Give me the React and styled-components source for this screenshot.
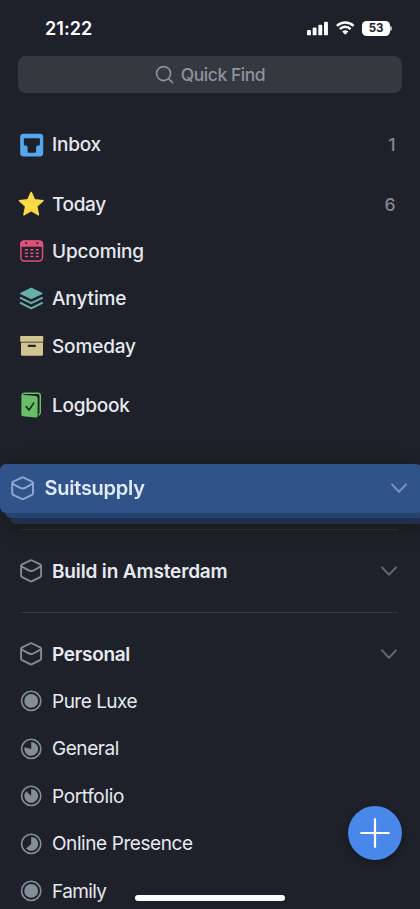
import React from 'react'
import styled, { createGlobalStyle } from 'styled-components'

const GlobalStyle = createGlobalStyle`
*{
  box-sizing:border-box;
}
body{
  margin:0;
  background:#1e2129;
}
`

const Screen = styled.main`
position:relative;
width:420px;
height:909px;
overflow:hidden;
background:#1e2129;
font-family:Inter, "Liberation Sans", sans-serif;
color:#e6e9ef;
`

const StatusBar = styled.header`
display:flex;
align-items:center;
justify-content:space-between;
height:56px;
padding:0 28px 0 45px;
`
const Clock = styled.span`
font-size:18px;
font-weight:600;
letter-spacing:0.05px;
color:#fff;
`
const StatusIcons = styled.div`
display:flex;
align-items:center;
gap:7.5px;
`
const Battery = styled.div`
display:flex;
align-items:center;
gap:0.5px;
`
const BatteryBody = styled.span`
width:27.5px;
height:15px;
border-radius:4.5px;
background:#fff;
color:#1e2129;
font-size:11.5px;
font-weight:700;
line-height:15.5px;
text-align:center;
`
const BatteryTip = styled.span`
width:1.6px;
height:5px;
border-radius:0 2px 2px 0;
background:#b9bbc0;
`

const SearchBar = styled.div`
display:flex;
align-items:center;
justify-content:center;
gap:7px;
height:36.5px;
margin:0 18px;
border-radius:8px;
background:#343940;
color:#8d929e;
font-size:17.5px;
font-weight:500;
letter-spacing:${p => p.$spacing}px;
`

const List = styled.nav`
padding-top:28.7px;
`
const Row = styled.div`
display:flex;
align-items:center;
gap:8px;
height:47.4px;
padding:0 22px 0 18px;
margin-bottom:${p => p.$gapAfter || 0}px;
`
const Label = styled.span`
flex:1;
font-size:19px;
font-weight:${p => p.$weight || 540};
letter-spacing:${p => p.$spacing || 0}px;
white-space:nowrap;
`
const Count = styled.span`
padding-right:2.5px;
font-size:17.5px;
font-weight:500;
color:#838892;
`
const Divider = styled.hr`
height:1px;
margin:${p => p.$space || '17px 22px 17.6px 21px'};
border:none;
background:#353941;
`

const Stack = styled.div`
position:relative;
height:60px;
margin-top:34.5px;
filter:drop-shadow(0 3px 9px rgba(20, 22, 20, 0.75));
`
const StackLayer = styled.div`
position:absolute;
left:${p => p.$inset}px;
right:-6px;
top:20px;
height:${p => p.$height}px;
border-radius:6px;
background:${p => p.$color};
`
const DraggedArea = styled.div`
position:relative;
display:flex;
align-items:center;
gap:8.5px;
width:422px;
height:49.5px;
padding:0 14px 0 9px;
border-radius:6px;
background:#30538a;
color:#e1ebfc;
`
const DraggedLabel = styled(Label)`
font-size:20px;
`

const AddButton = styled.button`
position:absolute;
right:18.5px;
bottom:49.5px;
display:flex;
align-items:center;
justify-content:center;
width:54px;
height:54px;
padding:0;
border:none;
border-radius:50%;
background:#4987ea;
box-shadow:0 3px 8px rgba(0, 0, 0, 0.3);
`
const HomeIndicator = styled.div`
position:absolute;
left:135px;
bottom:8.5px;
width:150px;
height:5.5px;
border-radius:3px;
background:#fff;
`
const Svg = styled.svg`
display:block;
flex:none;
`

const Icon = ({ children, size = 26 }) => (
  <Svg width={size} height={size} viewBox="0 0 26 26" fill="none">{children}</Svg>
)

const InboxIcon = () => (
  <Icon>
    <path fillRule="evenodd" fill="#55a7ee" d="M5.5 1.7H22Q25.2 1.7 25.2 5V21Q25.2 24.4 22 24.4H5.5Q2.2 24.4 2.2 21V5Q2.2 1.7 5.5 1.7ZM6.6 6.2Q5.8 6.2 5.8 7V12.6Q5.8 13.5 6.7 13.5H7.8Q9.6 13.5 9.6 15.3V19.4Q9.6 20.7 10.9 20.7H16.8Q18.1 20.7 18.1 19.4V15.3Q18.1 13.5 19.9 13.5H21Q21.9 13.5 21.9 12.6V7Q21.9 6.2 21 6.2Z" />
  </Icon>
)

const StarIcon = () => (
  <Icon>
    <path fill="#fcd945" stroke="#fcd945" strokeWidth="1.4" strokeLinejoin="round" d="M13.2 1.4 16.6 8.8 25 9.7 18.8 15.3 20.5 23.8 13.2 19.6 5.9 23.8 7.6 15.3 1.4 9.7 9.8 8.8Z" />
  </Icon>
)

const CalendarIcon = () => (
  <Icon>
    <rect x="2.9" y="3.1" width="21.6" height="19.8" rx="3.4" stroke="#dd5079" strokeWidth="1.5" />
    <path fill="#dd5079" d="M2.2 8.7V6Q2.2 2.4 5.8 2.4H21.6Q25.2 2.4 25.2 6V8.7Z" />
    <circle cx="8.2" cy="5.1" r="1" fill="#1e2129" />
    <circle cx="19.4" cy="5.1" r="1" fill="#1e2129" />
    <path stroke="#dd5079" strokeWidth="1.5" d="M6.8 11.8h3.2M12.2 11.8h3.2M17.6 11.8h3.2M6.8 15.2h3.2M12.2 15.2h3.2M17.6 15.2h3.2M6.8 18.6h3.2M12.2 18.6h3.2M17.6 18.6h3.2" />
  </Icon>
)

const LayersIcon = () => (
  <Icon>
    <path fill="#69b1a8" stroke="#69b1a8" strokeLinejoin="round" d="M13.3 2.1 24.4 7.5 13.3 12.7 2.2 7.5Z" />
    <path stroke="#69b1a8" strokeWidth="2" strokeLinejoin="round" d="M2 11.7 13.3 17.2 24.7 11.7M2 16.7 13.3 22.4 24.7 16.7" />
  </Icon>
)

const BoxIcon = () => (
  <Icon>
    <path fill="#d2c48e" d="M2.8 3H24.7Q25.2 3 25.2 3.5V8.7H2.2V3.5Q2.2 3 2.8 3ZM3 9.6H25V21.7Q25 22.7 24 22.7H4Q3 22.7 3 21.7Z" />
    <rect x="9.8" y="11.7" width="8" height="2.2" rx=".5" fill="#24262b" />
  </Icon>
)

const LogbookIcon = () => (
  <Icon>
    <path fill="#68bf67" d="M3.4 4Q3.4 2.6 4.9 2.7L17.6 3.9Q19.5 4.1 19.6 6V24Q19.6 25.6 18 25.4L5 24.2Q3.4 24 3.4 22.5Z" />
    <path stroke="#68bf67" strokeWidth="1.5" strokeLinecap="round" strokeLinejoin="round" d="M4.2 3.2Q4.4 1.3 6.4 1.3H19.9Q22.3 1.3 22.3 3.7V20.2Q22.3 21.8 21 22.8" />
    <path stroke="#20332a" strokeWidth="1.7" strokeLinecap="round" strokeLinejoin="round" d="M8.2 14.6 11 18 15.8 11.1" />
  </Icon>
)

const AreaIcon = ({ color = '#858b96', size }) => (
  <Icon size={size}>
    <path stroke={color} strokeWidth="1.9" strokeLinejoin="round" d="M12.1 2.5Q13.1 2 14.1 2.5L22.1 6.3Q23.1 6.8 23.1 7.9V17.5Q23.1 18.6 22.1 19.1L14.1 23.1Q13.1 23.6 12.1 23.1L4.1 19.1Q3.1 18.6 3.1 17.5V7.9Q3.1 6.8 4.1 6.3ZM3.4 8.4 10.2 12.2Q13.1 13.9 16 12.2L22.8 8.4" />
  </Icon>
)

// progress goes from 0 to 1, clockwise from the top
const ProgressIcon = ({ progress }) => {
  const angle = progress * Math.PI * 2
  const x = 13.2 + 6.9 * Math.sin(angle)
  const y = 12.9 - 6.9 * Math.cos(angle)
  return (
    <Icon>
      <circle cx="13.2" cy="12.9" r="9.6" stroke="#858d98" strokeWidth="1.6" />
      {progress === 1
        ? <circle cx="13.2" cy="12.9" r="6.9" fill="#858d98" />
        : <path fill="#858d98" d={`M13.2 12.9V6A6.9 6.9 0 ${progress > 0.5 ? 1 : 0} 1 ${x} ${y}Z`} />}
    </Icon>
  )
}

const Chevron = ({ color = '#626771' }) => (
  <Svg width="18" height="12" viewBox="0 0 18 12" fill="none">
    <path d="M2 2.4 9 9.7 16 2.4" stroke={color} strokeWidth="2" strokeLinecap="round" strokeLinejoin="round" />
  </Svg>
)

const SignalIcon = () => (
  <Svg width="21.5" height="15" viewBox="0 0 22 15" fill="#fff">
    <rect x="0" y="9" width="4" height="5.5" rx="1.2" />
    <rect x="5.8" y="6.5" width="4" height="8" rx="1.2" />
    <rect x="11.6" y="3.7" width="4" height="10.8" rx="1.2" />
    <rect x="17.4" y=".7" width="4" height="13.8" rx="1.2" />
  </Svg>
)

const WifiIcon = () => (
  <Svg width="18.5" height="14.4" viewBox="0 0 18 14" fill="none">
    <path d="M.9 4.7Q4.4 1.4 9 1.4T17.1 4.7M3.8 7.9Q6.1 5.6 9 5.6T14.2 7.9" stroke="#fff" strokeWidth="2.4" />
    <path d="M6 10.2Q9 7.9 12 10.2L9.5 12.9Q9 13.4 8.5 12.9Z" fill="#fff" />
  </Svg>
)

const SearchIcon = () => (
  <Svg width="19" height="19" viewBox="0 0 19 19" fill="none" stroke="#8d929e" strokeWidth="1.6" strokeLinecap="round">
    <circle cx="8.6" cy="8.6" r="7" />
    <path d="M13.7 13.7 17.6 17.6" />
  </Svg>
)

const lists = [
  { name: 'Inbox', icon: <InboxIcon />, count: 1, gap: 11.8, spacing: -0.2 },
  { name: 'Today', icon: <StarIcon />, count: 6, spacing: -0.35 },
  { name: 'Upcoming', icon: <CalendarIcon />, spacing: -0.15 },
  { name: 'Anytime', icon: <LayersIcon />, spacing: -0.1 },
  { name: 'Someday', icon: <BoxIcon />, gap: 11.8, spacing: -0.15 },
  { name: 'Logbook', icon: <LogbookIcon />, spacing: -0.25 },
]

const projects = [
  { name: 'Pure Luxe', progress: 1, spacing: -0.5 },
  { name: 'General', progress: 0.79, spacing: -0.45 },
  { name: 'Portfolio', progress: 0.87, spacing: -0.35 },
  { name: 'Online Presence', progress: 0.63, spacing: -0.42 },
  { name: 'Family', progress: 1, spacing: -0.6 },
]

const App = () => {
  return (
    <Screen>
      <GlobalStyle />
      <StatusBar>
        <Clock>21:22</Clock>
        <StatusIcons>
          <SignalIcon />
          <WifiIcon />
          <Battery>
            <BatteryBody>53</BatteryBody>
            <BatteryTip />
          </Battery>
        </StatusIcons>
      </StatusBar>
      <SearchBar $spacing={-0.45}>
        <SearchIcon />
        <span>Quick Find</span>
      </SearchBar>
      <List>
        {lists.map(item => (
          <Row key={item.name} $gapAfter={item.gap}>
            {item.icon}
            <Label $spacing={item.spacing}>{item.name}</Label>
            {item.count && <Count>{item.count}</Count>}
          </Row>
        ))}
      </List>
      <Stack>
        <StackLayer $inset={10} $height={40} $color="#20304c" />
        <StackLayer $inset={5} $height={34.5} $color="#27426e" />
        <DraggedArea>
          <AreaIcon color="#8ca7d1" size={27} />
          <DraggedLabel $weight={580} $spacing={-0.25}>Suitsupply</DraggedLabel>
          <Chevron color="#7893c0" />
        </DraggedArea>
      </Stack>
      <Divider $space="5.6px 22px 17.2px 21px" />
      <Row>
        <AreaIcon />
        <Label $weight={600} $spacing={-0.15}>Build in Amsterdam</Label>
        <Chevron />
      </Row>
      <Divider />
      <Row>
        <AreaIcon />
        <Label $weight={600} $spacing={-0.3}>Personal</Label>
        <Chevron />
      </Row>
      {projects.map(project => (
        <Row key={project.name}>
          <ProgressIcon progress={project.progress} />
          <Label $weight={400} $spacing={project.spacing}>{project.name}</Label>
        </Row>
      ))}
      <AddButton aria-label="New to-do">
        <Svg width="30" height="30" viewBox="0 0 30 30" stroke="#fff" strokeWidth="2.2" strokeLinecap="round">
          <path d="M15 1.2V28.8M1.2 15H28.8" />
        </Svg>
      </AddButton>
      <HomeIndicator />
    </Screen>
  )
}

export default App
